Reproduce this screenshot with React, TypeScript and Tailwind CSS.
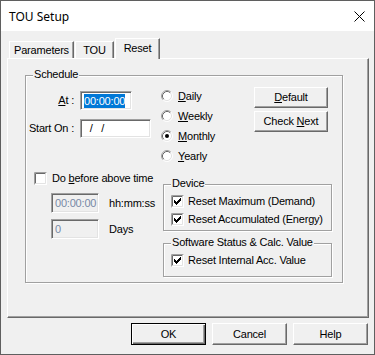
import React from "react";

function Radio({ checked }: { checked?: boolean }) {
  return (
    <svg width="12" height="12" viewBox="0 0 12 12" className="shrink-0">
      <circle cx="6" cy="6" r="5" fill="#fff" />
      <path d="M2.11 9.89 A5.5 5.5 0 0 1 9.89 2.11" stroke="#a0a0a0" fill="none" />
      <path d="M9.89 2.11 A5.5 5.5 0 0 1 2.11 9.89" stroke="#ffffff" fill="none" />
      <path d="M2.82 9.18 A4.5 4.5 0 0 1 9.18 2.82" stroke="#696969" fill="none" />
      <path d="M9.18 2.82 A4.5 4.5 0 0 1 2.82 9.18" stroke="#e3e3e3" fill="none" />
      {checked && <circle cx="6" cy="6" r="2" fill="#000" />}
    </svg>
  );
}

function Check({ checked }: { checked?: boolean }) {
  return (
    <svg width="13" height="13" viewBox="0 0 13 13" className="shrink-0">
      <rect x="0" y="0" width="13" height="13" fill="#fff" />
      <path d="M0.5 12.5 V0.5 H12.5" stroke="#a0a0a0" fill="none" />
      <path d="M1.5 11.5 V1.5 H11.5" stroke="#696969" fill="none" />
      <path d="M1.5 11.5 H11.5 V1.5" stroke="#e3e3e3" fill="none" />
      <rect x="2" y="2" width="9" height="9" fill="#fff" />
      {checked && (
        <path
          d="M3 5h1v3H3z M4 6h1v3H4z M5 7h1v3H5z M6 6h1v3H6z M7 5h1v3H7z M8 4h1v3H8z M9 3h1v3H9z"
          fill="#000"
        />
      )}
    </svg>
  );
}

const sunken =
  "border border-t-[#a0a0a0] border-l-[#a0a0a0] border-b-white border-r-white shadow-[inset_1px_1px_0_#696969,inset_-1px_-1px_0_#e3e3e3]";
const raised =
  "border border-t-white border-l-white border-b-[#696969] border-r-[#696969] shadow-[inset_-1px_-1px_0_#a0a0a0]";

function Btn({ children, def }: { children: React.ReactNode; def?: boolean }) {
  return (
    <div
      className={
        def
          ? "w-[75px] h-[22px] flex items-center justify-center bg-[#f0f0f0] border border-black shadow-[inset_1px_1px_0_#fff,inset_-1px_-1px_0_#696969,inset_-2px_-2px_0_#a0a0a0]"
          : "w-[75px] h-[22px] flex items-center justify-center bg-[#f0f0f0] " + raised
      }
    >
      {children}
    </div>
  );
}

function GroupLabel({ children }: { children: React.ReactNode }) {
  return (
    <span className="absolute top-[-8px] left-[7px] px-[1px] bg-[#f0f0f0] leading-[13px] whitespace-nowrap">
      {children}
    </span>
  );
}

const groupBox =
  "relative border border-[#a0a0a0] shadow-[1px_1px_0_#fff,inset_1px_1px_0_#fff]";

export default function App() {
  return (
    <div className="w-[375px] h-[355px] bg-[#f0f0f0] border border-[#5f5f5f] flex flex-col overflow-hidden text-[11px] leading-[13px] tracking-[-0.2px] text-black font-['Liberation_Sans',Arial,sans-serif]">
      {/* Title bar */}
      <div className="h-[30px] shrink-0 bg-white flex items-center justify-between pl-[8px] pr-[9px]">
        <span className="text-[12px] tracking-normal font-['Noto_Sans',sans-serif] leading-[16px] mt-[1px]">
          TOU Setup
        </span>
        <svg width="11" height="11" viewBox="0 0 11 11" className="mt-[1px]">
          <path d="M0.5 0.5 L10.5 10.5 M10.5 0.5 L0.5 10.5" stroke="#000" strokeWidth="1" />
        </svg>
      </div>

      {/* Tabs */}
      <div className="flex items-end h-[20px] mt-[7px] pl-[8px] shrink-0">
        <div className="w-[65px] h-[17px] flex items-center justify-center border-t border-l border-r border-t-white border-l-white border-r-[#696969] shadow-[inset_-1px_0_0_#a0a0a0]">
          Parameters
        </div>
        <div className="ml-[1px] w-[39px] h-[17px] flex items-center justify-center border-t border-l border-r border-t-white border-l-white border-r-[#696969] shadow-[inset_-1px_0_0_#a0a0a0]">
          TOU
        </div>
        <div className="relative z-10 ml-[1px] mb-[-1px] w-[45px] h-[21px] bg-[#f0f0f0] flex items-start justify-center pt-[3px] border-t border-l border-r border-t-white border-l-white border-r-[#696969] shadow-[inset_-1px_0_0_#a0a0a0]">
          Reset
        </div>
      </div>

      {/* Panel */}
      <div className="ml-[6px] w-[362px] h-[260px] shrink-0 flex flex-col border border-t-white border-l-white border-r-[#696969] border-b-[#696969] shadow-[inset_-1px_-1px_0_#a0a0a0]">
        <div className={"ml-[17px] mt-[16px] w-[318px] h-[208px] flex flex-col " + groupBox}>
          <GroupLabel>Schedule</GroupLabel>

          {/* Row 1 */}
          <div className="flex h-[90px]">
            <div className="w-[135px] pt-[15px] flex flex-col gap-[9px]">
              <div className="flex items-center h-[19px]">
                <div className="w-[48px] flex justify-end whitespace-nowrap">
                  <span>
                    <u>A</u>t :
                  </span>
                </div>
                <div className={"ml-[6px] w-[52px] h-[19px] bg-white flex items-center pl-[3px] " + sunken}>
                  <span className="bg-[#0078d7] text-white leading-[14px]">00:00:00</span>
                </div>
              </div>
              <div className="flex items-center h-[19px]">
                <div className="w-[48px] flex justify-end whitespace-nowrap">
                  <span>Start On :</span>
                </div>
                <div className={"ml-[6px] w-[71px] h-[19px] bg-white flex items-center pl-[3px] whitespace-pre " + sunken}>
                  {"  /   /"}
                </div>
              </div>
            </div>

            <div className="w-[93px] pt-[10px] flex flex-col">
              {[
                ["D", "aily", false],
                ["W", "eekly", false],
                ["M", "onthly", true],
                ["Y", "early", false],
              ].map(([a, b, c]) => (
                <div key={a as string} className="h-[20.5px] flex items-center gap-[5px]">
                  <Radio checked={c as boolean} />
                  <span>
                    <u>{a as string}</u>
                    {b as string}
                  </span>
                </div>
              ))}
            </div>

            <div className="pt-[11px] flex flex-col gap-[3px]">
              <div className={"w-[74px] h-[21px] flex items-center justify-center " + raised}>
                <span>
                  <u>D</u>efault
                </span>
              </div>
              <div className={"w-[74px] h-[21px] flex items-center justify-center " + raised}>
                <span>
                  Check <u>N</u>ext
                </span>
              </div>
            </div>
          </div>

          {/* Row 2 */}
          <div className="flex">
            <div className="w-[137px] pl-[8px] pt-[6px] flex flex-col">
              <div className="h-[13px] flex items-center gap-[5px] whitespace-nowrap">
                <Check />
                <span>
                  Do <u>b</u>efore above time
                </span>
              </div>
              <div className="mt-[8px] ml-[17px] flex items-center gap-[10px]">
                <div className={"w-[48px] h-[20px] flex items-center pl-[3px] text-[#7889a6] " + sunken}>
                  00:00:00
                </div>
                <span>hh:mm:ss</span>
              </div>
              <div className="mt-[6px] ml-[17px] flex items-center gap-[10px]">
                <div className={"w-[48px] h-[20px] flex items-center pl-[3px] text-[#7889a6] " + sunken}>
                  0
                </div>
                <span>Days</span>
              </div>
            </div>

            <div className="flex flex-col">
              <div className={"mt-[18px] w-[169px] h-[47px] pl-[7px] pt-[7px] flex flex-col " + groupBox}>
                <GroupLabel>Device</GroupLabel>
                <div className="h-[18px] flex items-center gap-[4px] whitespace-nowrap">
                  <Check checked />
                  <span>Reset Maximum (Demand)</span>
                </div>
                <div className="h-[18px] flex items-center gap-[4px] whitespace-nowrap">
                  <Check checked />
                  <span>Reset Accumulated (Energy)</span>
                </div>
              </div>
              <div className={"mt-[12px] w-[169px] h-[34px] pl-[7px] pt-[7px] flex flex-col " + groupBox}>
                <GroupLabel>Software Status &amp; Calc. Value</GroupLabel>
                <div className="h-[18px] flex items-center gap-[4px] whitespace-nowrap">
                  <Check checked />
                  <span>Reset Internal Acc. Value</span>
                </div>
              </div>
            </div>
          </div>
        </div>
      </div>

      {/* Bottom buttons */}
      <div className="flex justify-end gap-[6px] pr-[6px] mt-[5px]">
        <Btn def>OK</Btn>
        <Btn>Cancel</Btn>
        <Btn>Help</Btn>
      </div>
    </div>
  );
}
